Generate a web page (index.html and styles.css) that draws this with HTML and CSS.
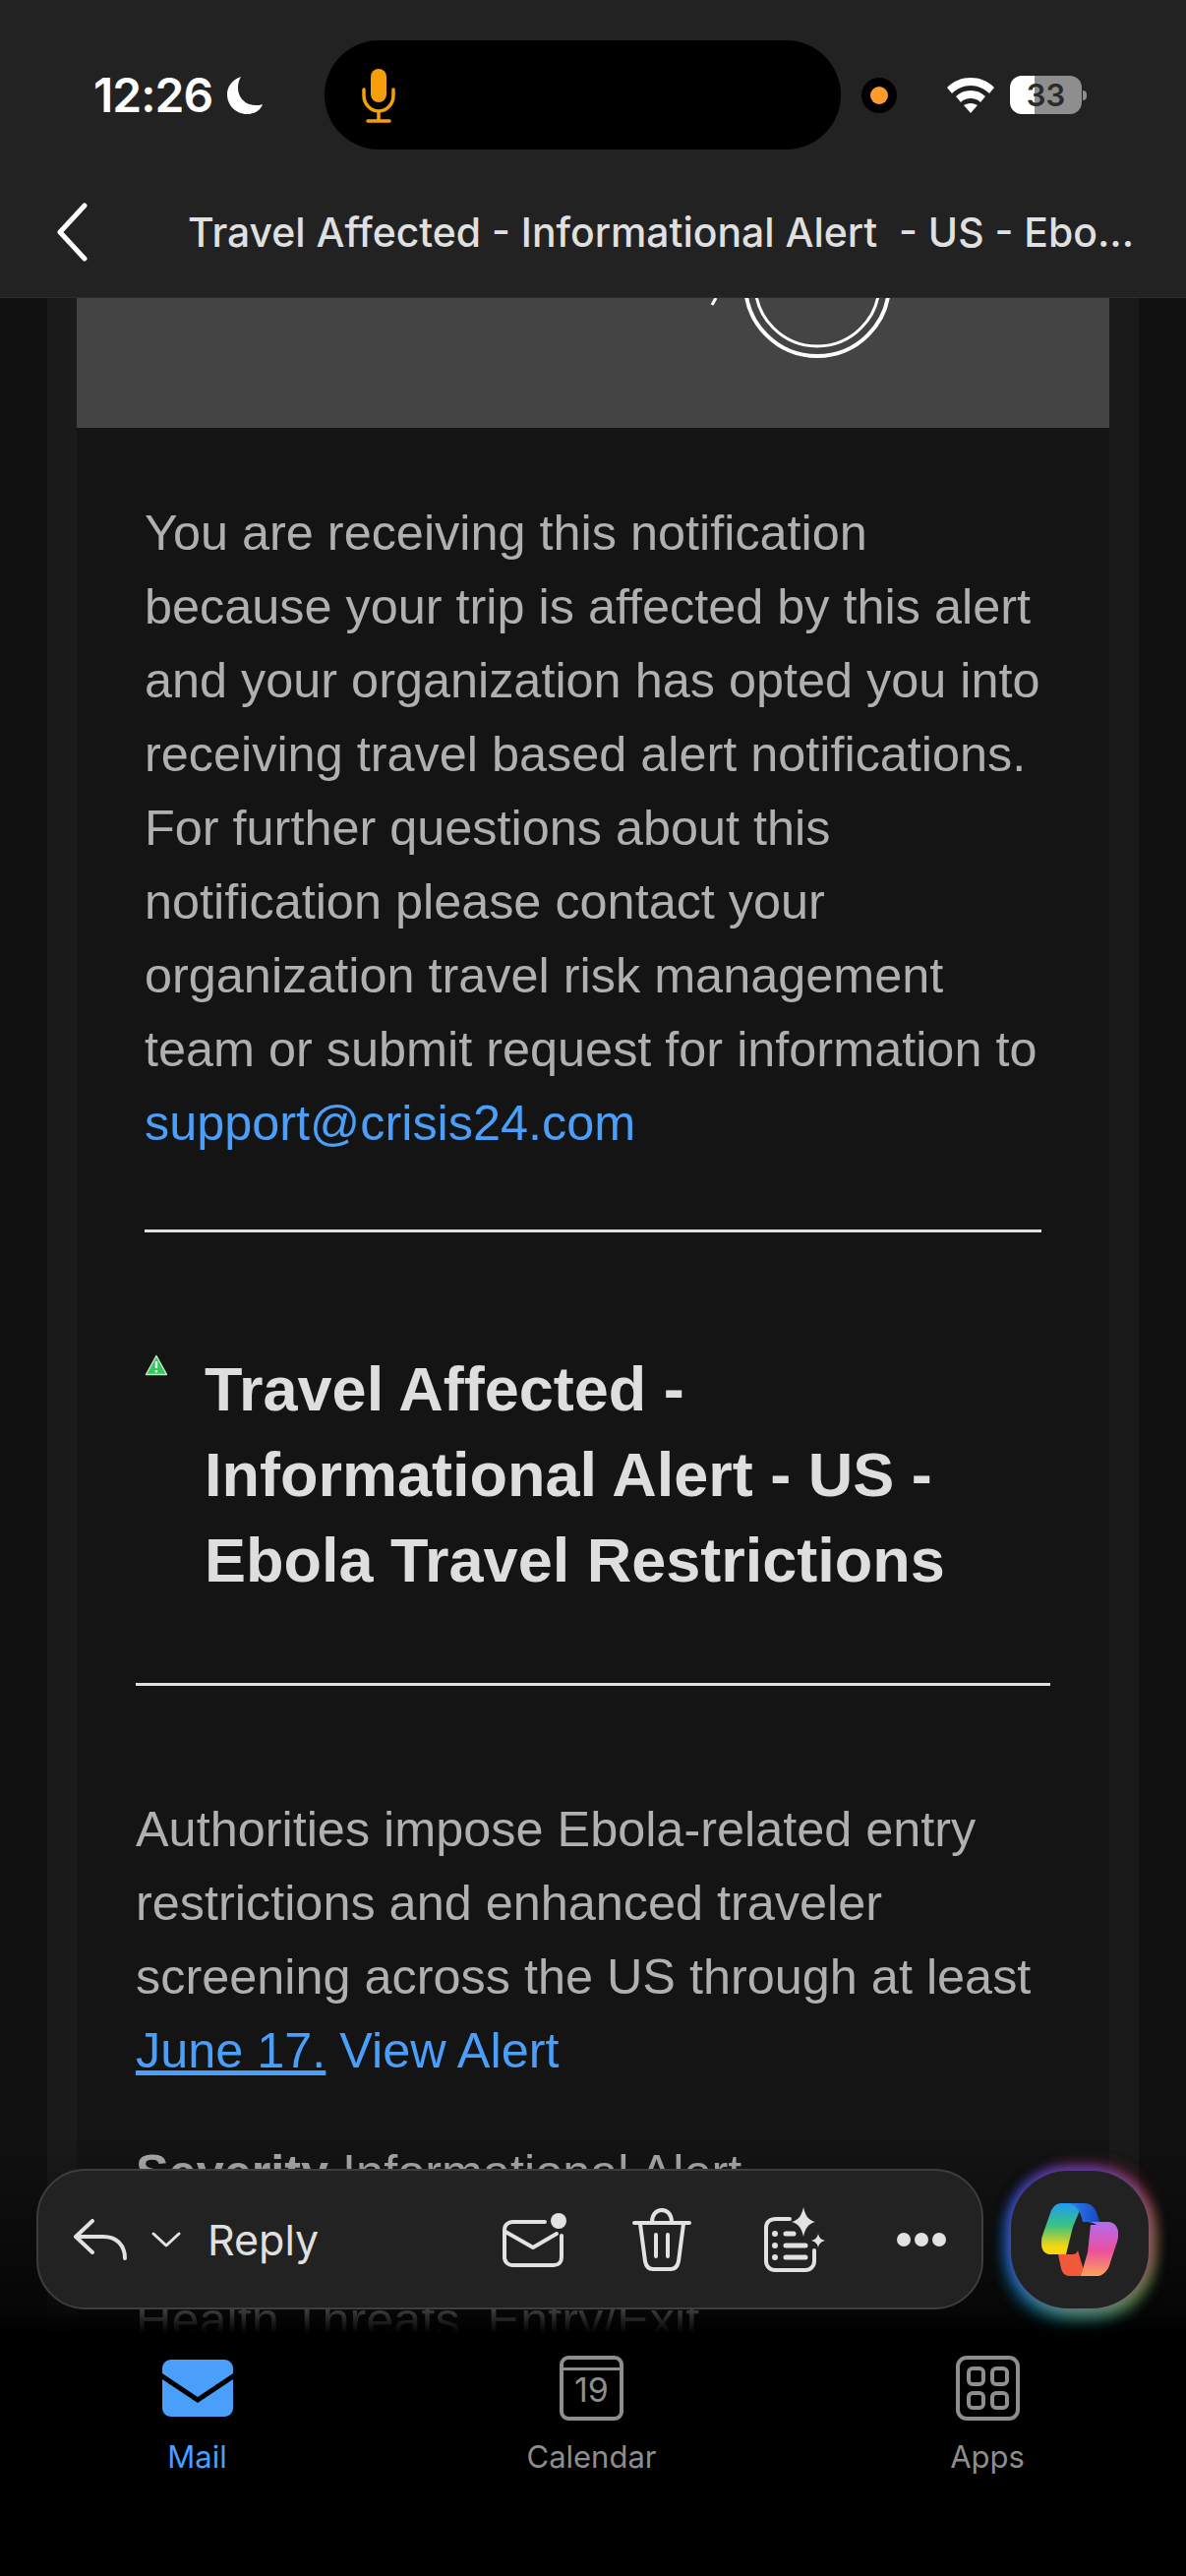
FILE: index.html
```html
<!DOCTYPE html>
<html lang="en">
<head>
    <meta charset="UTF-8">
    <meta name="viewport" content="width=device-width, initial-scale=1.0">
    <title>Travel Affected - Informational Alert</title>
    <link rel="stylesheet" href="styles.css">
</head>
<body>
<div class="screen">
    <header class="top">
        <div class="status">
            <div class="clock">
                <span class="time">12:26</span>
                <svg class="moon" viewBox="0 0 38 40"><path d="M15 1C6 4 1 11 1 19c0 11 9 20 20 20 8 0 14-4 16-10-2 1-5 1-7 1C19 30 12 22 12 12c0-4 1-8 3-11z" fill="#fff"/></svg>
            </div>
            <div class="island">
                <svg class="mic" viewBox="0 0 36 56" fill="none" stroke="#f5a00a" stroke-width="3.5" stroke-linecap="round">
                    <rect x="10" y="1" width="16" height="34" rx="8" fill="#f5a00a" stroke="none"/>
                    <path d="M3 22v6c0 9 7 16 15 16s15-7 15-16v-6M18 44v9M7 54h22"/>
                </svg>
            </div>
            <div class="cam"><span></span></div>
            <svg class="wifi" viewBox="0 0 48 36" fill="#fff">
                <path d="M24 0C15 0 7 3 0 10l5 6c5-5 12-8 19-8s14 3 19 8l5-6C41 3 33 0 24 0z"/>
                <path d="M24 13c-6 0-11 2-15 6l5 6c3-3 6-4 10-4s7 1 10 4l5-6c-4-4-9-6-15-6z"/>
                <path d="M24 26c-3 0-5 1-7 2l7 8 7-8c-2-1-4-2-7-2z"/>
            </svg>
            <div class="battery"><span>33</span></div>
            <div class="nub"></div>
        </div>
        <div class="nav">
            <svg class="back" viewBox="0 0 32 60" fill="none" stroke="#fff" stroke-width="5" stroke-linecap="round" stroke-linejoin="round"><path d="M29 3L4 30l25 27"/></svg>
            <div class="subject">Travel Affected - Informational Alert&nbsp; - US - Ebo...</div>
        </div>
    </header>

    <main class="mail">
        <div class="card">
            <div class="banner">
                <svg class="seal" viewBox="0 0 160 150" fill="none" stroke="#fff">
                    <circle cx="85" cy="60" r="73" stroke-width="4"/>
                    <circle cx="85" cy="60" r="63" stroke-width="3"/>
                    <path d="M-18 74L-22 81" stroke-width="3"/>
                </svg>
            </div>
            <div class="notice">
                <p>You are receiving this notification because your trip is affected by this alert and your organization has opted you into receiving travel based alert notifications. For further questions about this notification please contact your organization travel risk management team or submit request for information to <a class="plain" href="#">support@crisis24.com</a></p>
                <hr>
            </div>
            <div class="alert">
                <div class="alert-head">
                    <svg class="warn" viewBox="0 0 24 22">
                        <path d="M12 1.5L1.5 20.5h21z" fill="#34c759" stroke="#bfe8c8" stroke-width="1.5" stroke-linejoin="round"/>
                        <path d="M12 7v7M12 16v2.5" stroke="#eafff0" stroke-width="2.4"/>
                    </svg>
                    <h1>Travel Affected - Informational Alert - US - Ebola Travel Restrictions</h1>
                </div>
                <hr>
                <p class="summary">Authorities impose Ebola-related entry restrictions and enhanced traveler screening across the US through at least <a href="#">June 17.</a> <a class="plain" href="#">View Alert</a></p>
                <p class="severity"><b>Severity</b> Informational Alert</p>
                <p class="cats">Health Threats, Entry/Exit</p>
            </div>
        </div>
    </main>

    <div class="bottom">
        <div class="actions">
            <div class="toolbar">
                <svg class="ic-reply" viewBox="0 0 54 42" fill="none" stroke="#e2e2e2" stroke-width="4" stroke-linecap="round" stroke-linejoin="round"><path d="M19 2L2 18l17 16M2 18h28c13 0 22 8 22 22"/></svg>
                <svg class="ic-chev" viewBox="0 0 30 16" fill="none" stroke="#e2e2e2" stroke-width="3" stroke-linecap="round" stroke-linejoin="round"><path d="M2 2l13 12L28 2"/></svg>
                <span class="reply">Reply</span>
                <svg class="ic-mail" viewBox="0 0 66 56" fill="none" stroke="#e2e2e2" stroke-width="4" stroke-linecap="round" stroke-linejoin="round">
                    <path d="M43 10H10c-4 0-8 3-8 8v28c0 5 4 8 8 8h42c5 0 8-3 8-8V24"/>
                    <path d="M3 20l28 16 24-14"/>
                    <circle cx="57" cy="9" r="8" fill="#e2e2e2" stroke="none"/>
                </svg>
                <svg class="ic-trash" viewBox="0 0 60 64" fill="none" stroke="#e2e2e2" stroke-width="4" stroke-linecap="round" stroke-linejoin="round">
                    <path d="M2 15h56M20 14c0-7 4-12 10-12s10 5 10 12M8 16l5 38c1 5 4 8 8 8h18c4 0 7-3 8-8l5-38M24 27v22M36 27v22"/>
                </svg>
                <svg class="ic-list" viewBox="0 0 62 66" fill="none" stroke="#e2e2e2" stroke-width="4" stroke-linecap="round">
                    <path d="M26 12H12c-6 0-10 3-10 9v34c0 5 4 9 9 9h31c5 0 9-4 9-9V44"/>
                    <path d="M22 27h8M22 39h20M22 51h20" stroke-width="5"/>
                    <circle cx="11" cy="27" r="3" fill="#e2e2e2" stroke="none"/>
                    <circle cx="11" cy="39" r="3" fill="#e2e2e2" stroke="none"/>
                    <circle cx="11" cy="51" r="3" fill="#e2e2e2" stroke="none"/>
                    <path d="M40 0c2 9 5 13 12 15-7 2-10 6-12 15-2-9-5-13-12-15 7-2 10-6 12-15zM55 27c1 4 3 6 7 7-4 1-6 3-7 7-1-4-3-6-7-7 4-1 6-3 7-7z" fill="#e2e2e2" stroke="none"/>
                </svg>
                <div class="dots"><span></span><span></span><span></span></div>
            </div>
            <div class="copilot">
                <svg class="ic-copilot" viewBox="0 0 78 74">
                    <defs>
                        <linearGradient id="cpA" x1="0" y1="0" x2="0" y2="1">
                            <stop offset="0" stop-color="#1c9bf5"/>
                            <stop offset=".45" stop-color="#3fc37e"/>
                            <stop offset=".85" stop-color="#f5d60f"/>
                        </linearGradient>
                        <linearGradient id="cpB" x1="0" y1="0" x2="0" y2="1">
                            <stop offset="0" stop-color="#b66be8"/>
                            <stop offset=".5" stop-color="#ea4f9f"/>
                            <stop offset="1" stop-color="#ffa25a"/>
                        </linearGradient>
                        <linearGradient id="cpC" x1="0" y1="0" x2="1" y2="0">
                            <stop offset="0" stop-color="#2f8cf0"/>
                            <stop offset="1" stop-color="#1746c9"/>
                        </linearGradient>
                    </defs>
                    <path d="M20 0h22L32 24l-7 28H9c-6 0-9-5-9-11 0-3 0-5 1-8l8-23C11 4 15 0 20 0z" fill="url(#cpA)"/>
                    <path d="M24 0h20c7 0 11 5 13 12l2 7H42C40 8 35 0 24 0z" fill="url(#cpC)"/>
                    <path d="M17 52h14c3 0 5-1 6-4l5 17c1 4 3 7 7 9H29c-5 0-8-3-9-8z" fill="#f2593b"/>
                    <path d="M46 19h22c6 0 10 5 10 11 0 3 0 6-1 9l-8 24c-2 6-7 11-13 11H46c4-2 6-5 7-9l9-31c2-7-6-15-16-15z" fill="url(#cpB)"/>
                    <path d="M50 22h20c5 0 8 4 8 9 0 3-1 6-2 9l-7 23c-2 6-7 11-13 11H40L47 50z" fill="url(#cpB)"/>
                </svg>
            </div>
        </div>
        <nav class="tabs">
            <div class="tab active">
                <svg viewBox="0 0 72 58" class="ic-tab-mail">
                    <path d="M0 9c0-5 4-9 9-9h54c5 0 9 4 9 9v5L36 38 0 14z" fill="#4a9ffa"/>
                    <path d="M0 20l36 24 36-24v29c0 5-4 9-9 9H9c-5 0-9-4-9-9z" fill="#4a9ffa"/>
                </svg>
                <span>Mail</span>
            </div>
            <div class="tab">
                <div class="cal"><span>19</span></div>
                <span>Calendar</span>
            </div>
            <div class="tab">
                <div class="apps"><i></i><i></i><i></i><i></i></div>
                <span>Apps</span>
            </div>
        </nav>
    </div>
</div>
</body>
</html>
```

FILE: styles.css
```css
* {
    box-sizing: border-box;
}
html, body {
    margin: 0;
    background: #111;
}
.screen {
    position: relative;
    width: 1206px;
    height: 2619px;
    overflow: hidden;
    display: flex;
    flex-direction: column;
    font-family: Inter, "Liberation Sans", sans-serif;
}

/* status bar + subject */
.top {
    position: relative;
    z-index: 2;
    height: 303px;
    background: #222;
    border-bottom: 1px solid #2c2c2c;
    flex: none;
}
.status {
    display: flex;
    align-items: center;
    height: 111px;
    margin-top: 41px;
    padding-left: 95px;
    position: absolute;
    top: 0;
    left: 0;
    right: 0;
}
.clock {
    display: flex;
    align-items: center;
    width: 235px;
    height: 50px;
}
.time {
    color: #fff;
    font-size: 48px;
    font-weight: 600;
    letter-spacing: -1px;
}
.moon {
    width: 38px;
    height: 40px;
    margin-left: 14px;
}
.island {
    width: 525px;
    height: 111px;
    background: #000;
    border-radius: 56px;
    display: flex;
    align-items: center;
    padding-left: 37px;
}
.mic {
    width: 36px;
    height: 56px;
}
.cam {
    width: 36px;
    height: 36px;
    margin-left: 21px;
    background: #000;
    border-radius: 50%;
    display: flex;
    align-items: center;
    justify-content: center;
}
.cam span {
    width: 18px;
    height: 18px;
    background: #ff9a2e;
    border-radius: 50%;
}
.wifi {
    width: 48px;
    height: 36px;
    margin-left: 51px;
}
.battery {
    width: 73px;
    height: 39px;
    margin-left: 16px;
    border-radius: 12px;
    background: linear-gradient(to right, #fff 34%, #8e8e8e 34%);
    text-align: center;
    color: #2a2a2a;
    font-size: 31px;
    font-weight: 600;
    line-height: 39px;
}
.nub {
    width: 4px;
    height: 10px;
    margin-left: 1px;
    background: #8e8e8e;
    border-radius: 0 4px 4px 0;
}
.nav {
    position: absolute;
    left: 0;
    right: 0;
    top: 206px;
    height: 60px;
    display: flex;
    align-items: center;
    padding-left: 57px;
}
.back {
    width: 32px;
    height: 60px;
}
.subject {
    margin-left: 102px;
    color: #e0e0e0;
    font-size: 40.9px;
    font-weight: 500;
    white-space: nowrap;
}

/* email body */
.mail {
    flex: 1;
    padding: 0 48px;
    overflow: hidden;
}
.card {
    background: #1a1a1a;
    padding: 0 30px;
    height: 100%;
    display: block;
    font-family: "Liberation Sans", Arial, sans-serif;
    font-size: 50.4px;
    line-height: 75px;
    color: #b0b0b0;
}
.banner {
    position: relative;
    height: 132px;
    background: #444;
}
.seal {
    position: absolute;
    left: 668px;
    top: -74px;
    width: 160px;
    height: 150px;
    overflow: visible;
}
.notice, .alert {
    background: #141414;
}
.notice {
    padding: 69px 69px 0;
}
p {
    margin: 0;
}
a {
    color: #4a9ffa;
}
a.plain {
    text-decoration: none;
}
hr {
    border: 0;
    height: 3px;
    margin: 0;
    background: #e0e0e0;
}
.notice hr {
    margin-top: 71px;
}
.alert {
    padding: 0 60px;
    min-height: 1400px;
}
.alert-head {
    display: flex;
    align-items: flex-start;
    padding: 116px 0 81px 9px;
    gap: 37px;
}
.warn {
    width: 24px;
    height: 22px;
    flex: none;
    margin-top: 8px;
}
h1 {
    margin: 0;
    font-size: 63px;
    line-height: 87px;
    font-weight: 700;
    color: #dedede;
}
.summary {
    margin-top: 108px;
}
.severity {
    margin-top: 49px;
}
.cats {
    margin-top: 75px;
}

/* floating bar and tabs */
.bottom {
    position: absolute;
    z-index: 3;
    left: 0;
    right: 0;
    bottom: 0;
    height: 469px;
    background: linear-gradient(to bottom, rgba(0,0,0,0) 20px, rgba(0,0,0,.65) 198px, #000 222px);
}
.actions {
    display: flex;
    align-items: center;
    margin-top: 55px;
    padding-left: 37px;
    gap: 28px;
}
.toolbar {
    position: relative;
    display: flex;
    align-items: center;
    width: 963px;
    height: 143px;
    background: #222;
    border: 2px solid #3d3d3d;
    border-radius: 50px;
    padding-left: 36px;
}
.ic-reply {
    width: 54px;
    height: 42px;
}
.ic-chev {
    width: 30px;
    height: 16px;
    margin-left: 25px;
}
.reply {
    margin-left: 27px;
    width: 300px;
    color: #e0e0e0;
    font-size: 43px;
    line-height: 52px;
}
.ic-mail {
    width: 66px;
    height: 56px;
}
.ic-trash {
    width: 60px;
    height: 64px;
    margin-left: 66px;
}
.ic-list {
    width: 62px;
    height: 66px;
    margin-left: 74px;
}
.dots {
    display: flex;
    gap: 4px;
    margin-left: 73px;
}
.dots span {
    width: 14px;
    height: 14px;
    background: #e2e2e2;
    border-radius: 50%;
}
.copilot {
    width: 140px;
    height: 140px;
    background: #222;
    border-radius: 58px;
    display: flex;
    align-items: center;
    justify-content: center;
    box-shadow: -4px -4px 12px rgba(70,70,255,.55), 6px -6px 14px rgba(230,60,110,.5), 7px 7px 14px rgba(170,190,50,.5), -5px 7px 16px rgba(20,130,220,.65), 0 12px 20px rgba(20,180,170,.3);
}
.ic-copilot {
    width: 78px;
    height: 74px;
}
.tabs {
    display: grid;
    grid-template-columns: 401px 401px 404px;
    position: absolute;
    left: 0;
    top: 245px;
}
.tab {
    display: flex;
    flex-direction: column;
    align-items: center;
    color: #8e8e8e;
    font-size: 31px;
    line-height: 40px;
}
.tab.active {
    color: #4a9ffa;
}
.ic-tab-mail {
    width: 72px;
    height: 58px;
    margin: 4px 0 21px;
}
.cal {
    width: 65px;
    height: 66px;
    margin-bottom: 17px;
    border: 4px solid #8e8e8e;
    border-radius: 9px;
    padding-top: 8px;
    text-align: center;
    font-size: 34px;
    line-height: 40px;
}
.cal span {
    display: block;
    border-top: 3px solid #8e8e8e;
}
.apps {
    width: 65px;
    height: 66px;
    margin-bottom: 17px;
    border: 4px solid #8e8e8e;
    border-radius: 11px;
    padding: 7px;
    display: grid;
    grid-template-columns: 1fr 1fr;
    gap: 5px;
}
.apps i {
    border: 4px solid #8e8e8e;
    border-radius: 6px;
}
```
